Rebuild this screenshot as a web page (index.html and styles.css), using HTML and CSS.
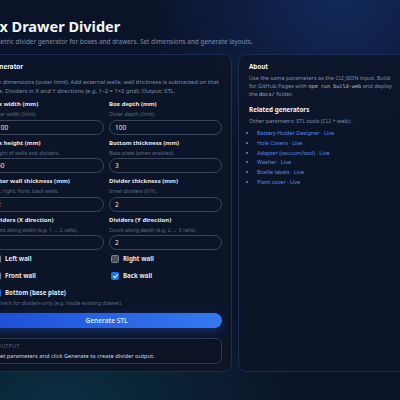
FILE: index.html
```html
<!DOCTYPE html>
<html lang="en">
<head>
<meta charset="UTF-8">
<title>Box Drawer Divider</title>
<link rel="stylesheet" href="styles.css">
</head>
<body>
<div class="page">
	<header class="intro">
		<h1>Box Drawer Divider</h1>
		<p>Parametric divider generator for boxes and drawers. Set dimensions and generate layouts.</p>
	</header>

	<div class="layout">
		<section class="card generator">
			<h2>Generator</h2>
			<p class="desc">Box dimensions (outer limit). Add external walls; wall thickness is subtracted on that side. Dividers in X and Y directions (e.g. 1–2 = 1×2 grid). Output: STL.</p>

			<form name="divider" class="fields">
				<label class="field">
					<span class="name">Box width (mm)</span>
					<span class="hint">Outer width (limit).</span>
					<input type="number" name="width" value="100">
				</label>
				<label class="field">
					<span class="name">Box depth (mm)</span>
					<span class="hint">Outer depth (limit).</span>
					<input type="number" name="depth" value="100">
				</label>
				<label class="field">
					<span class="name">Box height (mm)</span>
					<span class="hint">Height of walls and dividers.</span>
					<input type="number" name="height" value="50">
				</label>
				<label class="field">
					<span class="name">Bottom thickness (mm)</span>
					<span class="hint">Base plate (when enabled).</span>
					<input type="number" name="bottom" value="3">
				</label>
				<label class="field">
					<span class="name">Outer wall thickness (mm)</span>
					<span class="hint">Left, right, front, back walls.</span>
					<input type="number" name="wall" value="2">
				</label>
				<label class="field">
					<span class="name">Divider thickness (mm)</span>
					<span class="hint">Inner dividers (X/Y).</span>
					<input type="number" name="divider" value="2">
				</label>
				<label class="field">
					<span class="name">Dividers (X direction)</span>
					<span class="hint">Count along width (e.g. 1 → 2 cells).</span>
					<input type="number" name="dx" value="1">
				</label>
				<label class="field">
					<span class="name">Dividers (Y direction)</span>
					<span class="hint">Count along depth (e.g. 2 → 3 cells).</span>
					<input type="number" name="dy" value="2">
				</label>

				<div class="options">
					<div class="checks">
						<label class="check"><input type="checkbox" name="left"><span>Left wall</span></label>
						<label class="check"><input type="checkbox" name="right"><span>Right wall</span></label>
						<label class="check"><input type="checkbox" name="front"><span>Front wall</span></label>
						<label class="check"><input type="checkbox" name="back" checked><span>Back wall</span></label>
						<label class="check wide"><input type="checkbox" name="base" checked><span>Bottom (base plate)</span></label>
					</div>
					<p class="hint note">Uncheck for dividers-only (e.g. inside existing drawer).</p>
				</div>

				<button type="button" class="generate">Generate STL</button>
			</form>

			<div class="output">
				<div class="output-title">Output</div>
				<div class="output-text">Set parameters and click Generate to create divider output.</div>
			</div>
		</section>

		<aside class="card about">
			<h2>About</h2>
			<p>Use the same parameters as the CLI JSON input. Build for GitHub Pages with <code>npm run build-web</code> and deploy the <code>docs/</code> folder.</p>
			<h3>Related generators</h3>
			<p>Other parametric STL tools (CLI + web):</p>
			<ul class="related">
				<li><a href="#">Battery Holder Designer · Live</a></li>
				<li><a href="#">Hole Covers · Live</a></li>
				<li><a href="#">Adapter (vacuum/tool) · Live</a></li>
				<li><a href="#">Washer · Live</a></li>
				<li><a href="#">Braille labels · Live</a></li>
				<li><a href="#">Plant cover · Live</a></li>
			</ul>
		</aside>
	</div>
</div>
</body>
</html>
```

FILE: styles.css
```css
body {
	margin: 0;
	min-height: 100vh;
	overflow: hidden;
	font-family: "Noto Sans", sans-serif;
	color: #e2e8f0;
	background:
		radial-gradient(ellipse 70% 60% at 85% 0%, rgba(22, 58, 130, 0.55), transparent 70%),
		radial-gradient(ellipse 80% 40% at 15% 100%, rgba(10, 70, 85, 0.55), transparent 75%),
		#0b1328;
}

.page {
	width: 429px;
	margin-left: -19px;
	padding-top: 16px;
}

.intro h1 {
	margin: 0;
	font-size: 14.5px;
	line-height: 20px;
	font-weight: 700;
	color: #f1f5f9;
}

.intro p {
	margin: 1px 0 0;
	font-size: 6.4px;
	line-height: 9px;
	color: #7f8ea8;
}

.layout {
	display: grid;
	grid-template-columns: 251px 172px;
	gap: 6px;
	margin-top: 8px;
}

.card {
	background: rgba(13, 21, 40, 0.92);
	border: 1px solid #1b2c55;
	border-radius: 8px;
	padding: 7px 9px;
}

.card h2 {
	margin: 0;
	font-size: 6.3px;
	line-height: 10px;
	font-weight: 700;
	color: #f1f5f9;
}

.desc {
	margin: 6px 0 0;
	font-size: 5.8px;
	line-height: 9px;
	color: #7f8ea8;
}

/* two-column parameter grid */
.fields {
	display: grid;
	grid-template-columns: 1fr 1fr;
	column-gap: 5px;
	row-gap: 4px;
	margin-top: 4px;
}

.field {
	display: flex;
	flex-direction: column;
}

.field .name {
	font-size: 6px;
	line-height: 9px;
	font-weight: 700;
	color: #e2e8f0;
}

.hint {
	font-size: 5.2px;
	line-height: 8.5px;
	color: #5f6d85;
	margin-top: 1px;
}

.field input {
	margin-top: 1px;
	height: 15px;
	box-sizing: border-box;
	padding: 0 5px;
	border: 1px solid #3a475d;
	border-radius: 8px;
	background: transparent;
	color: #e2e8f0;
	font-family: inherit;
	font-size: 6.5px;
	outline: none;
}

.field input::-webkit-inner-spin-button {
	-webkit-appearance: none;
}

.options {
	grid-column: 1 / -1;
}

.checks {
	display: grid;
	grid-template-columns: 1fr 1fr;
	column-gap: 5px;
	row-gap: 8px;
}

.check {
	display: grid;
	grid-template-columns: 8px auto;
	justify-content: start;
	align-items: center;
	column-gap: 4px;
	height: 9px;
	padding-left: 2px;
	font-size: 6.2px;
	font-weight: 700;
	color: #e2e8f0;
}

.check.wide {
	grid-column: 1 / -1;
}

.check input {
	-webkit-appearance: none;
	appearance: none;
	position: relative;
	width: 8px;
	height: 8px;
	margin: 0;
	box-sizing: border-box;
	border: 1px solid #7a8190;
	border-radius: 1.5px;
	background: #4a505c;
}

.check input:checked {
	border-color: #1a73e8;
	background: #1a73e8;
}

/* tick mark */
.check input:checked::after {
	content: "";
	position: absolute;
	left: 2px;
	top: 0;
	width: 2px;
	height: 4px;
	border: solid #fff;
	border-width: 0 1px 1px 0;
	transform: rotate(40deg);
}

.note {
	display: block;
	margin: 2px 0 0;
}

.generate {
	grid-column: 1 / -1;
	margin-top: 1px;
	height: 15px;
	border: none;
	border-radius: 8px;
	background: linear-gradient(90deg, #1d4fd6, #3479f0);
	box-shadow: 0 3px 10px rgba(37, 99, 235, 0.35);
	color: #dfe9ff;
	font-family: inherit;
	font-size: 6.5px;
	font-weight: 600;
}

.output {
	margin-top: 10px;
	border: 1px solid #2e3a50;
	border-radius: 6px;
	padding: 4px 5px 2px;
	background: rgba(11, 18, 34, 0.6);
}

.output-title {
	font-size: 5px;
	line-height: 7px;
	letter-spacing: 0.5px;
	text-transform: uppercase;
	color: #5f6d85;
}

.output-text {
	margin-top: 2px;
	font-size: 5.7px;
	line-height: 9px;
	color: #cbd5e1;
}

/* side panel */
.about {
	padding: 7px 10px;
}

.about p {
	margin: 2px 0 0;
	font-size: 5.6px;
	line-height: 8px;
	color: #7f8ea8;
}

.about code {
	font-family: "DejaVu Sans Mono", monospace;
	font-size: 5.2px;
	line-height: 1;
	color: #b6c2d4;
}

.about h3 {
	margin: 7px 0 0;
	font-size: 6.3px;
	line-height: 10px;
	font-weight: 700;
	color: #f1f5f9;
}

.related {
	margin: 4px 0 0;
	padding-left: 8px;
	font-size: 5.5px;
	line-height: 9.8px;
	color: #4f8fe8;
}

.related a {
	color: #4f8fe8;
	text-decoration: none;
}
```
